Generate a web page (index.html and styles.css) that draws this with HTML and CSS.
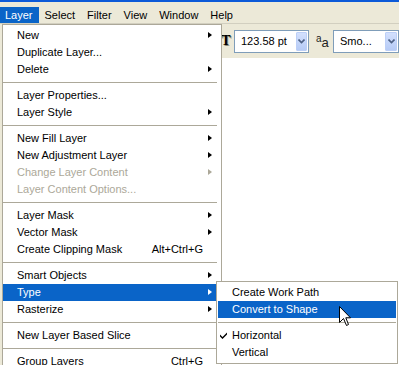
FILE: index.html
```html
<!DOCTYPE html>
<html lang="en">
<head>
    <meta charset="UTF-8">
    <title>Layer menu</title>
    <link rel="stylesheet" href="styles.css">
</head>
<body>

<div class="titlebar"></div>

<div class="menubar">
    <span class="menubar-item open">Layer</span>
    <span class="menubar-item">Select</span>
    <span class="menubar-item">Filter</span>
    <span class="menubar-item">View</span>
    <span class="menubar-item">Window</span>
    <span class="menubar-item">Help</span>
</div>

<div class="options-bar">
    <span class="type-icon">T</span>
    <div class="combo size-combo">
        <span class="combo-text">123.58 pt</span>
        <span class="combo-button">
            <svg width="7" height="5" viewBox="0 0 7 5"><path d="M0.5 0.5 L3.5 3.5 L6.5 0.5" fill="none" stroke="#4d6185" stroke-width="1.6"/></svg>
        </span>
    </div>
    <span class="aa-icon"><span class="aa-small">a</span><span class="aa-big">a</span></span>
    <div class="combo aa-combo">
        <span class="combo-text">Smo...</span>
        <span class="combo-button">
            <svg width="7" height="5" viewBox="0 0 7 5"><path d="M0.5 0.5 L3.5 3.5 L6.5 0.5" fill="none" stroke="#4d6185" stroke-width="1.6"/></svg>
        </span>
    </div>
</div>

<div class="workspace"></div>

<!-- Layer dropdown -->
<div class="menu main-menu">
    <div class="menu-item has-sub"><span class="label">New</span><span class="more"></span></div>
    <div class="menu-item"><span class="label">Duplicate Layer...</span><span class="more"></span></div>
    <div class="menu-item has-sub"><span class="label">Delete</span><span class="more"></span></div>
    <div class="menu-sep"></div>
    <div class="menu-item"><span class="label">Layer Properties...</span><span class="more"></span></div>
    <div class="menu-item has-sub"><span class="label">Layer Style</span><span class="more"></span></div>
    <div class="menu-sep"></div>
    <div class="menu-item has-sub"><span class="label">New Fill Layer</span><span class="more"></span></div>
    <div class="menu-item has-sub"><span class="label">New Adjustment Layer</span><span class="more"></span></div>
    <div class="menu-item has-sub disabled"><span class="label">Change Layer Content</span><span class="more"></span></div>
    <div class="menu-item disabled"><span class="label">Layer Content Options...</span><span class="more"></span></div>
    <div class="menu-sep"></div>
    <div class="menu-item has-sub"><span class="label">Layer Mask</span><span class="more"></span></div>
    <div class="menu-item has-sub"><span class="label">Vector Mask</span><span class="more"></span></div>
    <div class="menu-item"><span class="label">Create Clipping Mask</span><span class="shortcut">Alt+Ctrl+G</span><span class="more"></span></div>
    <div class="menu-sep"></div>
    <div class="menu-item has-sub"><span class="label">Smart Objects</span><span class="more"></span></div>
    <div class="menu-item has-sub active"><span class="label">Type</span><span class="more"></span></div>
    <div class="menu-item has-sub"><span class="label">Rasterize</span><span class="more"></span></div>
    <div class="menu-sep"></div>
    <div class="menu-item"><span class="label">New Layer Based Slice</span><span class="more"></span></div>
    <div class="menu-sep"></div>
    <div class="menu-item"><span class="label">Group Layers</span><span class="shortcut">Ctrl+G</span><span class="more"></span></div>
</div>

<!-- Type submenu -->
<div class="menu sub-menu">
    <div class="menu-item"><span class="check"></span><span class="label">Create Work Path</span></div>
    <div class="menu-item active"><span class="check"></span><span class="label">Convert to Shape</span></div>
    <div class="menu-sep"></div>
    <div class="menu-item">
        <span class="check"><svg width="7" height="7" viewBox="0 0 7 7"><path d="M0 2.5 L2.5 5 L7 0.5 V2.5 L2.5 7 L0 4.5 Z" fill="#000"/></svg></span>
        <span class="label">Horizontal</span>
    </div>
    <div class="menu-item"><span class="check"></span><span class="label">Vertical</span></div>
</div>

<svg class="cursor" width="13" height="21" viewBox="0 0 13 21">
    <path d="M0.5 0.5 L0.5 16.5 L4.5 12.5 L7.5 19.5 L9.5 18.5 L6.8 11.8 L11.5 11.8 Z" fill="#fff" stroke="#000" stroke-width="1" stroke-linejoin="miter"/>
</svg>

</body>
</html>
```

FILE: styles.css
```css
* {
    box-sizing: border-box;
}
html, body {
    margin: 0;
}
body {
    position: relative;
    width: 399px;
    height: 365px;
    overflow: hidden;
    background: #ece9d8;
    font-family: "Liberation Sans", Arial, sans-serif;
    font-size: 11px;
    color: #000;
}

.titlebar {
    height: 2px;
    background: #0c5ad8;
}

/* menu bar */
.menubar {
    display: flex;
    height: 22px;
    padding-top: 5px;
    border-bottom: 1px solid #d2cfc0;
    background: #ece9d8;
}
.menubar-item {
    height: 16px;
    line-height: 16px;
    padding: 0 6px;
}
.menubar-item:first-child {
    margin-left: -1px;
}
.menubar-item.open {
    background: #0a64c8;
    color: #fff;
}

/* tool options */
.options-bar {
    display: flex;
    align-items: center;
    height: 34px;
    padding-left: 221px;
    background: #ece9d8;
}
.type-icon {
    width: 10px;
    margin-right: 3px;
    font-family: "Liberation Serif", serif;
    font-weight: bold;
    font-size: 14px;
    line-height: 14px;
    text-align: center;
    text-shadow: 1px 1px 0 #8a8778;
}
.combo {
    display: flex;
    align-items: center;
    height: 23px;
    padding: 1px;
    border: 1px solid #7f9db9;
    background: #fff;
}
.size-combo {
    width: 75px;
}
.aa-combo {
    width: 66px;
}
.combo-text {
    flex: 1;
    padding-left: 5px;
    font-size: 11px;
}
.combo-button {
    display: flex;
    align-items: center;
    justify-content: center;
    width: 11px;
    height: 19px;
    border: 1px solid #bccff7;
    border-radius: 1px;
    background: linear-gradient(#d3e0fd, #b6cbf6);
}
.aa-combo .combo-button {
    width: 12px;
}
.aa-icon {
    display: flex;
    align-items: flex-start;
    width: 14px;
    height: 14px;
    margin: 0 3px 0 7px;
    color: #222;
}
.aa-small {
    font-size: 10px;
    line-height: 10px;
}
.aa-big {
    margin-top: 3px;
    font-size: 13px;
    line-height: 11px;
}

.workspace {
    height: 307px;
    margin-left: 2px;
    background: #fff;
}

/* drop-down menus */
.menu {
    position: absolute;
    background: #fff;
    border: 1px solid #aca899;
}
.main-menu {
    left: 2px;
    top: 24px;
    width: 220px;
    padding: 2px 1px 2px 0;
}
.sub-menu {
    left: 216px;
    top: 281px;
    width: 182px;
    padding: 2px 1px;
}
.menu-item {
    display: flex;
    align-items: center;
    height: 17px;
    line-height: 17px;
    padding-left: 14px;
    white-space: nowrap;
}
.sub-menu .menu-item {
    padding-left: 0;
}
.menu-item .label {
    flex: 1;
}
.menu-item.active {
    background: #0a64c8;
    color: #fff;
}
.menu-item.disabled {
    color: #aca899;
}
.menu-item .more {
    width: 17px;
    height: 7px;
}
.has-sub .more::before {
    content: "";
    display: block;
    width: 0;
    height: 0;
    margin-left: 5px;
    border-left: 4px solid #000;
    border-top: 3.5px solid transparent;
    border-bottom: 3.5px solid transparent;
}
.has-sub.active .more::before {
    border-left-color: #fff;
}
.has-sub.disabled .more::before {
    border-left-color: #aca899;
}
.check {
    display: flex;
    align-items: center;
    width: 14px;
    height: 17px;
    padding-left: 2px;
}
.menu-sep {
    height: 1px;
    margin: 4px 3px 4px 0;
    background: #aca899;
}
.sub-menu .menu-sep {
    margin: 4px 0;
}

.cursor {
    position: absolute;
    left: 339px;
    top: 306px;
}
```
